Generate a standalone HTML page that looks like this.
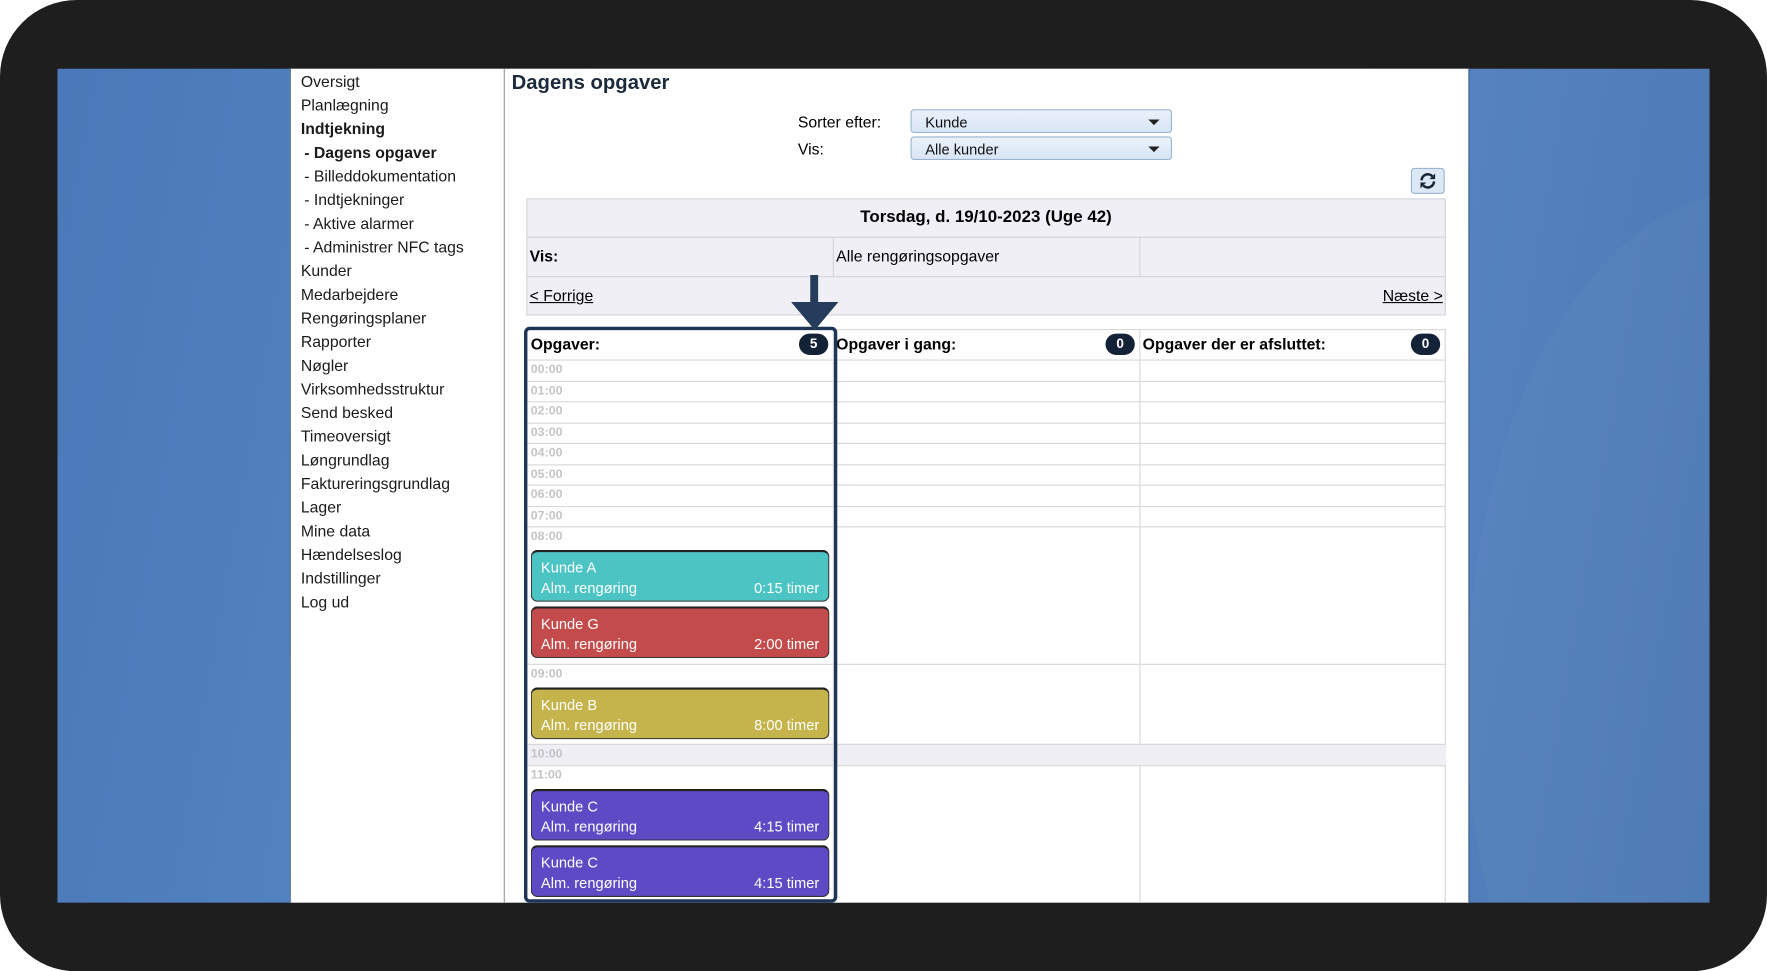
<!DOCTYPE html>
<html><head><meta charset="utf-8"><style>
html,body{margin:0;padding:0;width:1767px;height:971px;overflow:hidden;background:#fff;font-family:"Liberation Sans",Arial,sans-serif}
#w{position:absolute;left:0;top:0;width:1568px;height:862px;transform:scale(1.12691);transform-origin:0 0;overflow:hidden}
.frame{position:absolute;left:0;top:0;width:1568px;height:862px;background:#1f1e1f;border-radius:68px}
.blue{position:absolute;left:51px;top:61px;width:1466px;height:740px;background:linear-gradient(100deg,#4a78b8 0%,#5b8ac6 40%,#5a88c4 70%,#4c78b4 100%);overflow:hidden}
.panel{position:absolute;left:257px;top:61px;width:1045px;height:740px;background:#fff;border-left:1px solid #3a5a8a;border-right:1px solid #3a5a8a}
.a{position:absolute;white-space:nowrap}
.menu{font-size:14px;color:#1a1a1a}
.sel{position:absolute;height:21px;background:linear-gradient(#eaf1fa,#d8e5f5);border:1px solid #9bb3d3;border-radius:3px;font-size:13px;line-height:21px;padding-left:12px;box-sizing:border-box;color:#111}
.sel:after{content:"";position:absolute;right:10px;top:8px;border:5px solid transparent;border-top:5px solid #222;border-bottom:0}
.gray{background:#f0eff5}
.t{font-size:11px;color:#c4c4c4;font-weight:bold}
.card{position:absolute;left:471px;width:265px;height:46px;border-radius:6px;border:1px solid #333;border-top:2px solid #222;color:#fff;font-size:13px;box-sizing:border-box}
.card .n{position:absolute;left:8px;top:6px}.card .d{position:absolute;left:8px;top:24px}.card .h{position:absolute;right:8px;top:24px}
.badge{position:absolute;width:26px;height:19px;border-radius:10px;background:#142238;color:#fff;font-size:12px;font-weight:bold;text-align:center;line-height:19px}
</style></head><body><div id="w">
<div class="frame"></div>
<div class="blue"><div style="position:absolute;left:1250px;top:110px;width:500px;height:900px;border-radius:50%;background:rgba(255,255,255,0.025)"></div></div>
<div class="panel"></div>
<div class="a" style="left:447px;top:61px;width:1px;height:740px;background:#999"></div>
<div class="menu">
<div class="a" style="left:267px;top:64px">Oversigt</div>
<div class="a" style="left:267px;top:85px">Planlægning</div>
<div class="a" style="left:267px;top:106px;font-weight:bold">Indtjekning</div>
<div class="a" style="left:270px;top:127px;font-weight:bold">- Dagens opgaver</div>
<div class="a" style="left:270px;top:148px">- Billeddokumentation</div>
<div class="a" style="left:270px;top:169px">- Indtjekninger</div>
<div class="a" style="left:270px;top:190px">- Aktive alarmer</div>
<div class="a" style="left:270px;top:211px">- Administrer NFC tags</div>
<div class="a" style="left:267px;top:232px">Kunder</div>
<div class="a" style="left:267px;top:253px">Medarbejdere</div>
<div class="a" style="left:267px;top:274px">Rengøringsplaner</div>
<div class="a" style="left:267px;top:295px">Rapporter</div>
<div class="a" style="left:267px;top:316px">Nøgler</div>
<div class="a" style="left:267px;top:337px">Virksomhedsstruktur</div>
<div class="a" style="left:267px;top:358px">Send besked</div>
<div class="a" style="left:267px;top:379px">Timeoversigt</div>
<div class="a" style="left:267px;top:400px">Løngrundlag</div>
<div class="a" style="left:267px;top:421px">Faktureringsgrundlag</div>
<div class="a" style="left:267px;top:442px">Lager</div>
<div class="a" style="left:267px;top:463px">Mine data</div>
<div class="a" style="left:267px;top:484px">Hændelseslog</div>
<div class="a" style="left:267px;top:505px">Indstillinger</div>
<div class="a" style="left:267px;top:526px">Log ud</div>
</div>
<div class="a" style="left:454px;top:63px;font-size:18px;font-weight:bold;color:#1b2b3b">Dagens opgaver</div>
<div class="a" style="left:708px;top:100px;font-size:14px">Sorter efter:</div>
<div class="a" style="left:708px;top:124px;font-size:14px">Vis:</div>
<div class="sel" style="left:808px;top:97px;width:232px">Kunde</div>
<div class="sel" style="left:808px;top:121px;width:232px">Alle kunder</div>
<div class="a" style="left:1252px;top:149px;width:30px;height:23px;box-sizing:border-box;border:1px solid #9bb3d3;border-radius:3px;background:#dde8f5">
<svg width="28" height="21" viewBox="0 0 28 21"><g fill="none" stroke="#1a2535" stroke-width="2.3"><path d="M8.5 10a5.5 5.5 0 0 1 9.5-3.6"/><path d="M19.5 11a5.5 5.5 0 0 1-9.5 3.6"/></g><path d="M20.5 4v5h-5z" fill="#1a2535"/><path d="M7.5 17v-5h5z" fill="#1a2535"/></svg></div>
<div class="a gray" style="left:467px;top:176px;width:816px;height:104px;border:1px solid #d4d4d8;box-sizing:border-box"></div>
<div class="a" style="left:467px;top:210px;width:816px;height:1px;background:#d4d4d8"></div>
<div class="a" style="left:467px;top:245px;width:816px;height:1px;background:#d4d4d8"></div>
<div class="a" style="left:739px;top:210px;width:1px;height:35px;background:#d4d4d8"></div>
<div class="a" style="left:1011px;top:210px;width:1px;height:35px;background:#d4d4d8"></div>
<div class="a" style="left:467px;top:184px;width:816px;text-align:center;font-size:15px;font-weight:bold">Torsdag, d. 19/10-2023 (Uge 42)</div>
<div class="a" style="left:470px;top:219px;font-size:14px;font-weight:bold">Vis:</div>
<div class="a" style="left:742px;top:219px;font-size:14px">Alle rengøringsopgaver</div>
<div class="a" style="left:470px;top:254px;font-size:14px;text-decoration:underline">&lt; Forrige</div>
<div class="a" style="left:1227px;top:254px;font-size:14px;text-decoration:underline">Næste &gt;</div>
<div class="a" style="left:467px;top:292px;width:816px;height:509px;border:1px solid #d8d8d8;box-sizing:border-box;border-bottom:none"></div>
<div class="a" style="left:1011px;top:292px;width:1px;height:509px;background:#d8d8d8"></div>
<div class="a" style="left:467px;top:660px;width:816px;height:19px;background:#f0eff5"></div>
<div id="lines"></div>
<div class="a" style="left:471px;top:297px;font-size:14px;font-weight:bold">Opgaver:</div>
<div class="a" style="left:742px;top:297px;font-size:14px;font-weight:bold">Opgaver i gang:</div>
<div class="a" style="left:1014px;top:297px;font-size:14px;font-weight:bold">Opgaver der er afsluttet:</div>
<div class="badge" style="left:709px;top:296px">5</div>
<div class="badge" style="left:981px;top:296px">0</div>
<div class="badge" style="left:1252px;top:296px">0</div>
<div class="card" style="top:488px;background:#4bc4c3"><span class="n">Kunde A</span><span class="d">Alm. rengøring</span><span class="h">0:15 timer</span></div>
<div class="card" style="top:538px;background:#c44b4b"><span class="n">Kunde G</span><span class="d">Alm. rengøring</span><span class="h">2:00 timer</span></div>
<div class="card" style="top:610px;background:#c4b44b"><span class="n">Kunde B</span><span class="d">Alm. rengøring</span><span class="h">8:00 timer</span></div>
<div class="card" style="top:700px;background:#5e4ac4"><span class="n">Kunde C</span><span class="d">Alm. rengøring</span><span class="h">4:15 timer</span></div>
<div class="card" style="top:750px;background:#5e4ac4"><span class="n">Kunde C</span><span class="d">Alm. rengøring</span><span class="h">4:15 timer</span></div>
<div class="a" style="left:465px;top:290px;width:278px;height:511px;border:3px solid #1d3656;border-radius:5px;box-sizing:border-box"></div>
<svg class="a" style="left:700px;top:244px" width="46" height="50"><rect x="19" y="0" width="7" height="26" fill="#253c5c"/><path d="M2 24h42l-21 25z" fill="#253c5c"/></svg>
<script>
var L=document.getElementById('lines'),h='';
var rows=[[319,'00:00'],[337.5,'01:00'],[356,'02:00'],[374.5,'03:00'],[393,'04:00'],[411.5,'05:00'],[430,'06:00'],[448.5,'07:00'],[467,'08:00'],[589,'09:00'],[660,'10:00'],[679,'11:00']];
rows.forEach(function(r){h+='<div class="a" style="left:467px;top:'+r[0]+'px;width:816px;height:1px;background:#d8d8d8"></div><div class="a t" style="left:471px;top:'+(r[0]+3)+'px">'+r[1]+'</div>';});
h+='<div class="a" style="left:739px;top:292px;width:1px;height:509px;background:#d8d8d8"></div>';
L.innerHTML=h;
</script>
</div></body></html>
